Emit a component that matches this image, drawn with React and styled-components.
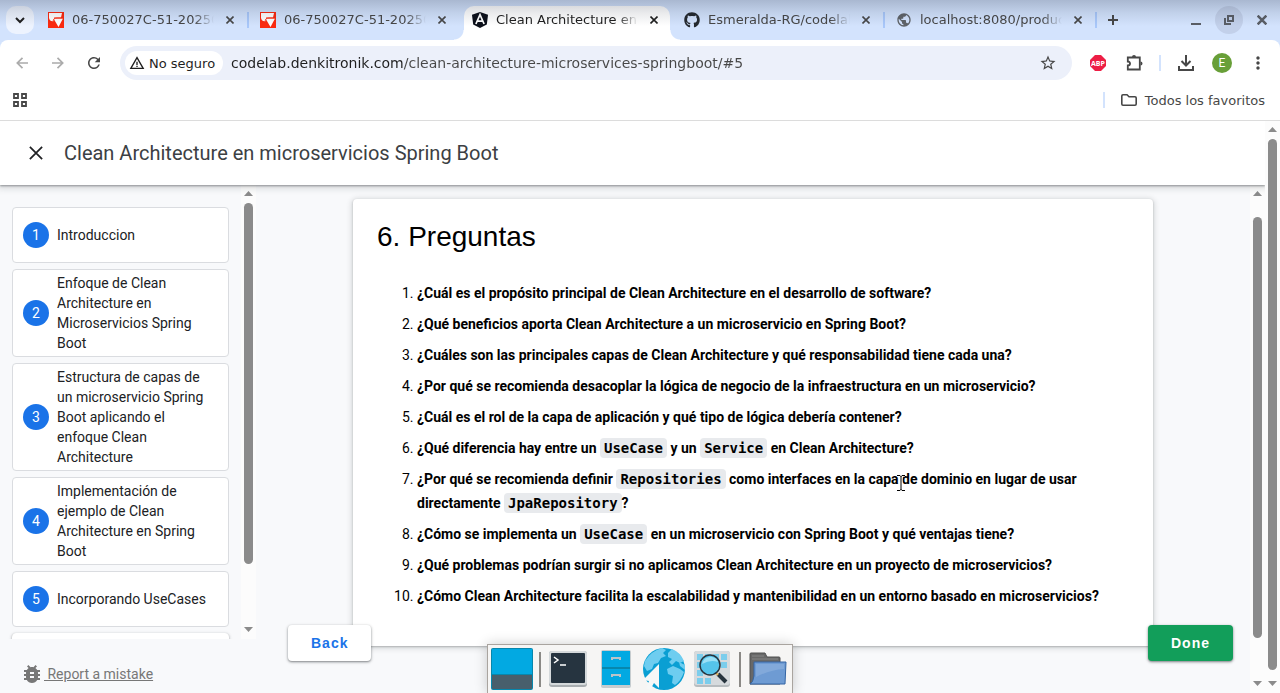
import React from "react";
import styled, { createGlobalStyle, css } from "styled-components";
import {
  MdBugReport,
  MdStarBorder,
  MdMoreVert,
  MdRefresh,
  MdWarningAmber,
  MdPublic,
} from "react-icons/md";
import { FaGithub } from "react-icons/fa";

const GlobalStyle = createGlobalStyle`
  * { box-sizing: border-box; }
  html, body { margin: 0; height: 100%; }
  body { font-family: Roboto, "Liberation Sans", sans-serif; overflow: hidden; }
  button { font: inherit; border: 0; padding: 0; background: none; color: inherit; }
`;

const Window = styled.div`
  position: relative;
  display: flex;
  flex-direction: column;
  height: 100vh;
  background: #d3e3fd;
`;

const TopShade = styled.div`
  position: absolute;
  inset: 0 0 auto;
  height: 26px;
  pointer-events: none;
  background: linear-gradient(rgba(20, 30, 50, 0.22), rgba(20, 30, 50, 0.09) 50%, rgba(20, 30, 50, 0));
`;

/* Browser chrome */
const TabStrip = styled.div`
  display: flex;
  align-items: flex-end;
  height: 40px;
  padding: 0 4px 0 6px;
  font: 13px "DejaVu Sans", sans-serif;
  color: #474747;
`;

const TabSearch = styled.button`
  display: grid;
  place-items: center;
  flex: none;
  width: 28px;
  height: 28px;
  margin: 0 2px 6px 0;
  border-radius: 10px;
  background: #edf3fe;
  color: #1f1f1f;
`;

const TabBox = styled.div`
  position: relative;
  display: flex;
  align-items: center;
  flex: 0 1 212px;
  min-width: 0;
  height: 34px;
  padding: 0 10px 6px 12px;
  ${(p) =>
    p.$separator &&
    css`
      &::after {
        content: "";
        position: absolute;
        right: -1px;
        top: 6px;
        width: 2px;
        height: 16px;
        background: #a8c7fa;
      }
    `}
  ${(p) =>
    p.$active &&
    css`
      color: #1f1f1f;
      &::before {
        content: "";
        position: absolute;
        inset: 0 2px 0 4px;
        border-radius: 10px 10px 0 0;
        background: #fff;
      }
    `}
`;

const TabFoot = styled.span`
  position: absolute;
  bottom: 0;
  width: 10px;
  height: 10px;
  ${(p) => (p.$side === "left" ? "left: -6px;" : "right: -8px;")}
  background: radial-gradient(
    circle at ${(p) => (p.$side === "left" ? "0 0" : "100% 0")},
    transparent 9px,
    #fff 10px
  );
`;

const Favicon = styled.span`
  position: relative;
  display: grid;
  flex: none;
  width: 16px;
  height: 16px;
  margin-right: 8px;
`;

const TabTitle = styled.button`
  position: relative;
  flex: 1;
  min-width: 0;
  overflow: hidden;
  white-space: nowrap;
  text-align: left;
  line-height: 20px;
  mask-image: linear-gradient(90deg, #000 calc(100% - 20px), transparent);
`;

const TabClose = styled.button`
  position: relative;
  display: grid;
  place-items: center;
  flex: none;
  width: 16px;
  height: 16px;
  margin-left: 8px;
`;

const NewTab = styled.button`
  display: grid;
  place-items: center;
  width: 34px;
  height: 28px;
  margin-bottom: 6px;
`;

const WindowControls = styled.div`
  display: flex;
  gap: 5px;
  margin: 0 0 6px auto;
  color: #5a5e66;
`;

const WindowButton = styled.button`
  display: grid;
  place-items: center;
  width: 28px;
  height: 28px;
  border-radius: 50%;
  background: ${(p) => (p.$lit ? "#c2d0ea" : "none")};
`;

const Toolbar = styled.div`
  display: flex;
  align-items: center;
  height: 46px;
  padding: 0 4px;
  border-radius: 8px 8px 0 0;
  background: #fff;
  color: #474747;
`;

const IconButton = styled.button`
  display: grid;
  place-items: center;
  flex: none;
  width: 36px;
  height: 34px;
  color: ${(p) => (p.$muted ? "#ababab" : "#474747")};
`;

const Omnibox = styled.div`
  display: flex;
  align-items: center;
  flex: 1;
  height: 34px;
  margin: 0 8px;
  padding: 0 6px 0 5px;
  border-radius: 17px;
  background: #ecf0fa;
`;

const SecurityChip = styled.button`
  display: flex;
  align-items: center;
  gap: 4px;
  flex: none;
  height: 24px;
  padding: 0 8px 0 4px;
  border-radius: 12px;
  background: #fff;
  color: #1f1f1f;
  font: 13px "DejaVu Sans", sans-serif;
`;

const Address = styled.input`
  flex: 1;
  min-width: 0;
  margin-left: 8px;
  padding: 0;
  border: 0;
  outline: 0;
  font: 14px "DejaVu Sans", sans-serif;
  line-height: 20px;
  color: transparent;
  background: linear-gradient(90deg, #1f1f1f 173px, #474747 173px);
  background-clip: text;
`;

const Divider = styled.span`
  width: 2px;
  height: 16px;
  margin: 0 7px;
  background: #d3e3fd;
`;

const Avatar = styled.span`
  display: grid;
  place-items: center;
  width: 20px;
  height: 20px;
  border-radius: 50%;
  background: #689f38;
  color: #fff;
  font-size: 12px;
`;

const Bookmarks = styled.div`
  display: flex;
  align-items: center;
  height: 35px;
  padding: 0 15px 6px 2px;
  border-bottom: 1px solid #dcdcdc;
  background: #fff;
  color: #474747;
`;

const AllBookmarks = styled.button`
  display: flex;
  align-items: center;
  gap: 8px;
  margin-left: 9px;
  font: 13px "DejaVu Sans", sans-serif;
`;

const Spacer = styled.span`
  flex: 1;
`;

/* Scroll bars */
const Track = styled.div`
  display: flex;
  flex-direction: column;
  align-items: center;
  flex: none;
  width: 15px;
  padding: 6px 0 7px;
  background: #fcfcfc;
`;

const Thumb = styled.div`
  flex: 1;
  width: 9px;
  margin: ${(p) => p.$before}px 0 ${(p) => p.$after}px;
  border-radius: 5px;
  background: #8b8b8b;
`;

/* Page */
const Viewport = styled.div`
  display: flex;
  flex: 1;
  min-height: 0;
  background: #fff;
`;

const Page = styled.div`
  display: flex;
  flex-direction: column;
  flex: 1;
  min-width: 0;
`;

const Header = styled.header`
  position: relative;
  z-index: 1;
  display: flex;
  align-items: center;
  flex: none;
  gap: 21px;
  height: 64px;
  padding: 0 29px;
  background: #fff;
  color: #3c4043;
  box-shadow: 0 1px 2px rgba(60, 64, 67, 0.5), 0 2px 6px 2px rgba(60, 64, 67, 0.15);
  clip-path: inset(0 0 -12px 0);
`;

const HeaderClose = styled.a`
  display: grid;
  color: #202124;
`;

const HeaderTitle = styled.h1`
  margin: 0;
  font-size: 20px;
  font-weight: 400;
  line-height: 28px;
`;

const Body = styled.div`
  display: flex;
  flex: 1;
  min-height: 0;
  background: #f8f9fb;
`;

const Drawer = styled.nav`
  display: flex;
  flex-direction: column;
  flex: none;
  width: 256px;
`;

const StepArea = styled.div`
  display: flex;
  flex: 1;
  min-height: 0;
`;

const Steps = styled.ol`
  display: flex;
  flex-direction: column;
  flex: 1;
  gap: 6px;
  min-width: 0;
  margin: 0;
  padding: 22px 12px 0;
  list-style: none;
  overflow: hidden;
`;

const Step = styled.li`
  flex: none;
  border: 1px solid ${(p) => (p.$current ? "#fff" : "#dadce0")};
  border-radius: 4px;
  background: #fff;
  ${(p) => p.$current && "box-shadow: 0 1px 2px rgba(60,64,67,.3), 0 1px 3px 1px rgba(60,64,67,.15);"}
`;

const StepLink = styled.a`
  display: flex;
  align-items: center;
  gap: 8px;
  min-height: 54px;
  padding: 3px 14px 3px 10px;
  color: #202124;
  font-size: 14px;
  line-height: 20px;
  text-decoration: none;
`;

const StepNumber = styled.span`
  display: grid;
  place-items: center;
  flex: none;
  width: 26px;
  height: 26px;
  border-radius: 50%;
  background: #1a73e8;
  color: #fff;
`;

const Report = styled.a`
  display: flex;
  align-items: center;
  flex: none;
  height: 54px;
  padding: 16px 20px 0;
  color: #777;
  font-size: 14px;
  white-space: pre;
`;

const Main = styled.main`
  position: relative;
  flex: 1;
  min-width: 0;
  overflow: hidden;
  padding: 14px 32px 0;
`;

const Card = styled.article`
  max-width: 800px;
  margin: 0 auto;
  padding: 20px 24px 38px;
  border-radius: 4px;
  background: #fff;
  color: #000;
  box-shadow: 0 1px 2px rgba(60, 64, 67, 0.3), 0 1px 5px 2px rgba(60, 64, 67, 0.15);
`;

const CardTitle = styled.h2`
  margin: 0 0 26px;
  font: 28px "Liberation Sans", sans-serif;
  line-height: 36px;
`;

const Questions = styled.ol`
  margin: 0;
  padding-left: 40px;
  font-size: 14px;
  line-height: 24px;
`;

const Question = styled.li`
  & + & {
    margin-top: 7px;
  }
`;

const Code = styled.code`
  padding: 2px 4px;
  border-radius: 4px;
  background: #e8eaed;
  font-family: "DejaVu Sans Mono", monospace;
  font-size: 14px;
`;

const NavButton = styled.button`
  position: absolute;
  bottom: 32px;
  ${(p) => (p.$primary ? "right: 17px;" : "left: 32px;")}
  height: 36px;
  padding: 0 23px;
  border-radius: 4px;
  background: ${(p) => (p.$primary ? "#129e5a" : "#fff")};
  color: ${(p) => (p.$primary ? "#fff" : "#1a73e8")};
  font: bold 14px "Liberation Sans", sans-serif;
  letter-spacing: 1px;
  box-shadow: 0 1px 2px rgba(60, 64, 67, 0.5), 0 1px 3px 1px rgba(60, 64, 67, 0.15);
`;

/* Desktop panel and pointer */
const Dock = styled.div`
  position: absolute;
  left: calc(50% - 153px);
  bottom: 0;
  display: flex;
  align-items: center;
  height: 49px;
  border: 1px solid #a9a49f;
  border-bottom: 0;
  background: #f6f5f4;
  box-shadow: 0 0 12px rgba(0, 0, 0, 0.2);
`;

const DockButton = styled.button`
  display: grid;
  place-items: center;
  width: 48px;
  height: 48px;
`;

const DockRule = styled.span`
  width: 2px;
  height: 35px;
  margin: 0 3px;
  background: #8b8986;
`;

const Pointer = styled.svg`
  position: absolute;
  left: 896px;
  top: 474px;
`;

const RedMark = () => (
  <svg width="16" height="16" viewBox="0 0 16 16">
    <path fill="#fb2a10" d="M0 0h16v16H0z" />
    <path fill="#fff" d="M1 1h13l-1 4.500H6V9Q2 10 1 6zM5.500 6.500H15L10.500 15z" />
    <path fill="none" stroke="#fb2a10" strokeWidth=".9" d="M5.200 9.500Q5 6 9 6h6" />
  </svg>
);

const AngularMark = () => (
  <svg width="16" height="16" viewBox="0 0 16 16">
    <path fill="#0b0f19" d="M8 0l8 2.8-1.2 9.8L8 16l-6.800-3.400L0 2.800z" />
    <path fill="none" stroke="#fff" strokeWidth="1.700" d="M3.900 12L8 2.600 12.100 12M5.500 9.200h5" />
  </svg>
);

const Cross = ({ size = 8, weight = 2 }) => (
  <svg width={size} height={size} viewBox="0 0 8 8" fill="none" stroke="currentColor" strokeWidth={weight}>
    <path d="M.5.5l7 7M7.500.5l-7 7" />
  </svg>
);

const tabs = [
  { title: "06-750027C-51-2025010", icon: <RedMark />, separator: true },
  { title: "06-750027C-51-2025010", icon: <RedMark /> },
  { title: "Clean Architecture en microservicios", icon: <AngularMark />, active: true },
  { title: "Esmeralda-RG/codelab", icon: <FaGithub size={16} color="#24292f" />, separator: true },
  { title: "localhost:8080/productos", icon: <MdPublic size={16} color="#5f6368" />, separator: true },
];

const steps = [
  "Introduccion",
  "Enfoque de Clean Architecture en Microservicios Spring Boot",
  "Estructura de capas de un microservicio Spring Boot aplicando el enfoque Clean Architecture",
  "Implementación de ejemplo de Clean Architecture en Spring Boot",
  "Incorporando UseCases",
];

const questions = [
  "¿Cuál es el propósito principal de Clean Architecture en el desarrollo de software?",
  "¿Qué beneficios aporta Clean Architecture a un microservicio en Spring Boot?",
  "¿Cuáles son las principales capas de Clean Architecture y qué responsabilidad tiene cada una?",
  "¿Por qué se recomienda desacoplar la lógica de negocio de la infraestructura en un microservicio?",
  "¿Cuál es el rol de la capa de aplicación y qué tipo de lógica debería contener?",
  <>¿Qué diferencia hay entre un <Code>UseCase</Code> y un <Code>Service</Code> en Clean Architecture?</>,
  <>¿Por qué se recomienda definir <Code>Repositories</Code> como interfaces en la capa de dominio en lugar de usar directamente <Code>JpaRepository</Code>?</>,
  <>¿Cómo se implementa un <Code>UseCase</Code> en un microservicio con Spring Boot y qué ventajas tiene?</>,
  "¿Qué problemas podrían surgir si no aplicamos Clean Architecture en un proyecto de microservicios?",
  "¿Cómo Clean Architecture facilita la escalabilidad y mantenibilidad en un entorno basado en microservicios?",
];

function Scrollbar({ before, after }) {
  return (
    <Track aria-hidden="true">
      <svg width="9" height="5"><path fill="#8b8b8b" d="M4.500 0L9 5H0z" /></svg>
      <Thumb $before={before} $after={after} />
      <svg width="9" height="5"><path fill="#8b8b8b" d="M0 0h9L4.500 5z" /></svg>
    </Track>
  );
}

function BrowserChrome() {
  return (
    <>
      <TabStrip>
        <TabSearch aria-label="Buscar pestañas">
          <svg width="10" height="8" fill="none" stroke="currentColor" strokeWidth="2">
            <path d="M1 2l4 4 4-4" />
          </svg>
        </TabSearch>
        {tabs.map((tab, i) => (
          <TabBox key={i} $active={tab.active} $separator={tab.separator}>
            {tab.active && <TabFoot $side="left" />}
            {tab.active && <TabFoot $side="right" />}
            <Favicon>{tab.icon}</Favicon>
            <TabTitle>{tab.title}</TabTitle>
            <TabClose aria-label="Cerrar pestaña"><Cross weight={1.600} /></TabClose>
          </TabBox>
        ))}
        <NewTab aria-label="Nueva pestaña">
          <svg width="10" height="10" stroke="currentColor" strokeWidth="2"><path d="M5 0v10M0 5h10" /></svg>
        </NewTab>
        <WindowControls>
          <WindowButton aria-label="Minimizar">
            <svg width="10" height="10"><path fill="currentColor" d="M0 8h10v2H0z" /></svg>
          </WindowButton>
          <WindowButton aria-label="Restaurar" $lit>
            <svg width="10" height="10" fill="none" stroke="currentColor" strokeWidth="2">
              <path d="M4 1h5v5H4zM1 3v6h6" />
            </svg>
          </WindowButton>
          <WindowButton aria-label="Cerrar"><Cross size={10} /></WindowButton>
        </WindowControls>
      </TabStrip>
      <Toolbar>
        <IconButton aria-label="Atrás" $muted>
          <svg width="12" height="12" fill="none" stroke="currentColor" strokeWidth="1.700"><path d="M12 6H1.500M6.500.8L1.300 6l5.200 5.200" /></svg>
        </IconButton>
        <IconButton aria-label="Adelante" $muted>
          <svg width="12" height="12" fill="none" stroke="currentColor" strokeWidth="1.700"><path d="M0 6h10.500M5.500.8L10.700 6l-5.200 5.200" /></svg>
        </IconButton>
        <IconButton aria-label="Recargar"><MdRefresh size={18} /></IconButton>
        <Omnibox>
          <SecurityChip><MdWarningAmber size={16} />No seguro</SecurityChip>
          <Address
            aria-label="Dirección"
            defaultValue="codelab.denkitronik.com/clean-architecture-microservices-springboot/#5"
          />
          <IconButton aria-label="Favorito"><MdStarBorder size={18} /></IconButton>
        </Omnibox>
        <IconButton aria-label="Adblock Plus">
          <svg width="16" height="16" viewBox="0 0 16 16">
            <path fill="#ed1e45" d="M5 0h6l5 5v6l-5 5H5l-5-5V5z" />
            <text x="8" y="11" textAnchor="middle" fill="#fff" fontFamily="Open Sans, sans-serif" fontWeight="700" fontSize="7">ABP</text>
          </svg>
        </IconButton>
        <IconButton aria-label="Extensiones">
          <svg width="18" height="18" fill="none" stroke="currentColor" strokeWidth="1.800">
            <path d="M2.800 3.500h12v12h-12v-4c3 0 3-4 0-4z" />
            <path fill="currentColor" stroke="none" d="M7 3a2 2 0 014 0zM15.500 7.500a2 2 0 010 4z" />
          </svg>
        </IconButton>
        <Divider />
        <IconButton aria-label="Descargas">
          <svg width="16" height="16" fill="none" stroke="currentColor" strokeWidth="2">
            <path d="M8 0v10M3.500 6L8 10.500 12.500 6M1 11v4h14v-4" />
          </svg>
        </IconButton>
        <IconButton aria-label="Perfil"><Avatar>E</Avatar></IconButton>
        <IconButton aria-label="Menú"><MdMoreVert size={20} /></IconButton>
      </Toolbar>
      <Bookmarks>
        <IconButton aria-label="Aplicaciones">
          <svg width="14" height="14" fill="none" stroke="currentColor" strokeWidth="1.800">
            <path d="M1 1h4v4H1zM9 1h4v4H9zM1 9h4v4H1zM9 9h4v4H9z" />
          </svg>
        </IconButton>
        <Spacer />
        <Divider />
        <AllBookmarks>
          <svg width="16" height="12" fill="none" stroke="currentColor" strokeWidth="1.600">
            <path d="M2 .8h4l2 2h6q1.200 0 1.200 1.200v6q0 1.200-1.200 1.200H2Q.8 11.200.8 10V2Q.8.8 2 .8z" />
          </svg>
          Todos los favoritos
        </AllBookmarks>
      </Bookmarks>
    </>
  );
}

function DesktopDock() {
  return (
    <Dock>
      <DockButton aria-label="Escritorio">
        <svg width="42" height="42">
          <rect width="42" height="42" rx="2" fill="#0787ad" />
          <path fill="#02a9e2" d="M1 1h40v25H1z" />
          <path fill="#485f6c" d="M1 27h40v14H1z" />
        </svg>
      </DockButton>
      <DockRule />
      <DockButton aria-label="Terminal">
        <svg width="40" height="36">
          <rect x="1" width="38" height="36" rx="3" fill="#a9aeb1" />
          <rect x="1" width="38" height="34" rx="3" fill="#d5d9db" />
          <rect x="3" y="2" width="34" height="30" rx="1" fill="#263440" />
          <path fill="none" stroke="#fff" strokeWidth="1.500" d="M6 6l4 3-4 3M12 14h6" />
        </svg>
      </DockButton>
      <DockButton aria-label="Archivos">
        <svg width="30" height="38">
          <rect width="30" height="38" rx="2" fill="#c6cccf" />
          <path fill="#02a9e2" d="M1 1h28v34H1z" />
          <path stroke="#0787ad" strokeWidth="2" d="M1 18h28" />
          <path fill="none" stroke="#b9c4c9" strokeWidth="2" d="M11 10V8h8v2M11 27v-2h8v2" />
        </svg>
      </DockButton>
      <DockButton aria-label="Navegador">
        <svg width="42" height="42">
          <circle cx="21" cy="21" r="21" fill="#0a9fd3" />
          <path fill="#6ecdf0" d="M2 13Q8 3 19 0l4 2-3 3 3 3-5 2-3 5-4 1-2 5-5 2-3-5zM25 5l4-4q8 3 12 12l-4 2-4-2-4 4-3-3 3-3-4-2zM24 21l6-3 7 3 4 3q-3 9-9 13l-3-2 1-7-5-2zM36 14l6 3v5l-5-4z" />
          <path fill="#f6f7f7" d="M16 16v24l-5-5-4 7-4-2 3-7-6-1z" />
        </svg>
      </DockButton>
      <DockButton aria-label="Buscador">
        <svg width="36" height="36">
          <rect width="36" height="36" rx="3" fill="#b7bcbf" />
          <rect width="36" height="34" rx="3" fill="#d6dadd" />
          <path fill="#7bcdec" d="M3 3h6v6H3zM11 3h6v6h-6zM19 3h6v6h-6zM27 3h6v6h-6zM27 11h6v6h-6zM3 11h6v6H3zM3 19h6v6H3zM3 27h6v6H3zM11 27h6v6h-6z" />
          <path stroke="#27343e" strokeWidth="4" d="M24 23l8 8" />
          <path stroke="#e6b65c" strokeWidth="2" d="M22 22l2 2" />
          <circle cx="16" cy="14" r="10" fill="#55c4eb" stroke="#27343e" strokeWidth="1.500" />
          <path fill="#9be0f6" d="M8 13q2-8 10-7 5 1 6 5-7-3-16 2z" />
        </svg>
      </DockButton>
      <DockRule />
      <DockButton aria-label="Carpeta">
        <svg width="38" height="34">
          <path fill="#686868" stroke="#505050" d="M1 32V2q0-1 1-1h14l2 4h12q1 0 1 1v26z" />
          <path stroke="#858585" d="M3 4h12M3 7h26" />
          <path fill="#6e9bd3" stroke="#3465a4" d="M5 10h32l-1 22H1q3-1 4-8z" />
          <path fill="#8fb3df" d="M7 12h28v5Q20 18 7 25z" opacity=".6" />
        </svg>
      </DockButton>
    </Dock>
  );
}

export default function App() {
  return (
    <Window>
      <GlobalStyle />
      <BrowserChrome />
      <TopShade />
      <Viewport>
        <Page>
          <Header>
            <HeaderClose href="#close" aria-label="Close"><Cross size={14} weight={1} /></HeaderClose>
            <HeaderTitle>Clean Architecture en microservicios Spring Boot</HeaderTitle>
          </Header>
          <Body>
            <Drawer>
              <StepArea>
                <Steps>
                  {steps.map((label, i) => (
                    <Step key={label}>
                      <StepLink href={`#${i}`}>
                        <StepNumber>{i + 1}</StepNumber>
                        {label}
                      </StepLink>
                    </Step>
                  ))}
                  <Step $current><StepLink href="#5" aria-label="Preguntas" /></Step>
                </Steps>
                <Scrollbar before={7} after={63} />
              </StepArea>
              <Report href="#report">
                <MdBugReport size={24} />
                <span> Report a mistake</span>
              </Report>
            </Drawer>
            <Main>
              <Card>
                <CardTitle>6. Preguntas</CardTitle>
                <Questions>
                  {questions.map((question, i) => (
                    <Question key={i}><strong>{question}</strong></Question>
                  ))}
                </Questions>
              </Card>
              <NavButton>Back</NavButton>
              <NavButton $primary>Done</NavButton>
            </Main>
            <Scrollbar before={21} after={43} />
          </Body>
        </Page>
        <Scrollbar before={7} after={11} />
      </Viewport>
      <DesktopDock />
      <Pointer width="10" height="18" fill="none" aria-hidden="true">
        <path stroke="#fff" strokeWidth="3" d="M1 1h3l1 1 1-1h3M5 2v14M1 17h3l1-1 1 1h3" />
        <path stroke="#000" d="M1 1.500h3l1 1 1-1h3M5 2v14M1 16.500h3l1-1 1 1h3" />
      </Pointer>
    </Window>
  );
}
